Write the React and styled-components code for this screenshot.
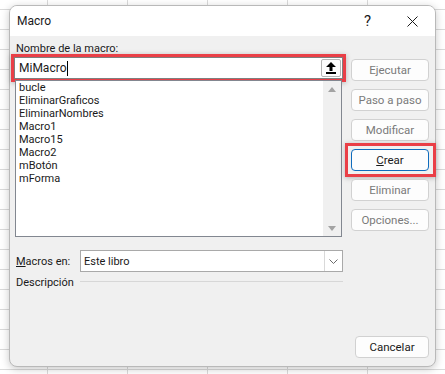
import React from "react";
import styled, { createGlobalStyle } from "styled-components";

const Global = createGlobalStyle`
  html, body { margin: 0; padding: 0; height: 100%; }
  body {
    background-color: #ffffff;
    background-image:
      linear-gradient(to right, #dadada 1px, transparent 1px),
      linear-gradient(to bottom, #dadada 1px, transparent 1px);
    background-size: 80px 20px;
    background-position: 47px 9px;
    font-family: Roboto, "Noto Sans", sans-serif;
    font-size: 11px;
    color: #1a1a1a;
    overflow: hidden;
  }
  #root { padding-top: 5px; padding-left: 9px; }
`;

const Dialog = styled.div`
  box-sizing: border-box;
  width: 427px;
  height: 362px;
  background: #f0f0f0;
  border: 1px solid #b9b9b9;
  border-radius: 8px;
  box-shadow: 0 2px 8px rgba(0, 0, 0, 0.22);
  display: flex;
  flex-direction: column;
`;

const TitleBar = styled.div`
  height: 30px;
  background: #ffffff;
  border-radius: 7px 7px 0 0;
  display: flex;
  align-items: center;
  padding-left: 7px;
`;

const Title = styled.div`
  flex: 1;
  font-size: 12px;
  color: #1a1a1a;
`;

const CaptionButton = styled.div`
  width: 45px;
  height: 30px;
  display: flex;
  align-items: center;
  justify-content: center;
  font-size: 15px;
  color: #1a1a1a;
`;

const Body = styled.div`
  flex: 1;
  display: flex;
  gap: 8px;
  padding: 5px 6px 8px 4px;
`;

const LeftCol = styled.div`
  width: 329px;
  display: flex;
  flex-direction: column;
`;

const Label = styled.div`
  height: 15px;
  line-height: 15px;
  padding-left: 2px;
  margin-bottom: 1px;
`;

const NameField = styled.div`
  box-sizing: border-box;
  height: 22px;
  background: #ffffff;
  border: 1px solid #7f7f7f;
  display: flex;
  align-items: center;
  padding-left: 4px;
  outline: 3px solid #ea3f47;
  outline-offset: 0px;
  box-shadow: 0 0 0 3px #ea3f47, 0 1px 5px 3px rgba(0, 0, 0, 0.25);
`;

const NameText = styled.span`
  flex: 1;
  display: flex;
  align-items: center;
  font-size: 12px;
  line-height: 14px;
`;

const Caret = styled.span`
  display: inline-block;
  width: 1px;
  height: 15px;
  background: #000;
  margin-left: 1px;
`;

const PickButton = styled.div`
  box-sizing: border-box;
  width: 20px;
  height: 18px;
  margin-right: 1px;
  border: 1px solid #b5b5b5;
  border-radius: 2px;
  background: #fdfdfd;
  display: flex;
  align-items: center;
  justify-content: center;
`;

const List = styled.div`
  box-sizing: border-box;
  margin-top: 1px;
  margin-left: 1px;
  width: 327px;
  height: 157px;
  background: #ffffff;
  border: 1px solid #828790;
  display: flex;
`;

const Items = styled.div`
  flex: 1;
  padding-left: 3px;
`;

const Item = styled.div`
  height: 13px;
  line-height: 13px;
  font-size: 11px;
  white-space: nowrap;
`;

const ScrollBar = styled.div`
  width: 18px;
  background: #f0f0f0;
  display: flex;
  flex-direction: column;
  justify-content: space-between;
  align-items: center;
  padding: 6px 0 5px;
`;

const FieldRow = styled.div`
  display: flex;
  align-items: center;
  margin-top: ${(p) => p.$top}px;
  height: ${(p) => p.$h}px;
`;

const RowLabel = styled.div`
  width: 64px;
  padding-left: 2px;
  flex-shrink: 0;
`;

const Combo = styled.div`
  box-sizing: border-box;
  width: 263px;
  height: 22px;
  background: #ffffff;
  border: 1px solid #a9a9a9;
  display: flex;
  align-items: center;
`;

const ComboText = styled.div`
  flex: 1;
  padding-left: 3px;
`;

const ComboButton = styled.div`
  box-sizing: border-box;
  width: 18px;
  height: 20px;
  border-left: 1px solid #d9d9d9;
  display: flex;
  align-items: center;
  justify-content: center;
`;

const Rule = styled.div`
  flex: 1;
  height: 1px;
  margin-top: -1px;
  background: #d7d7d7;
`;

const RightCol = styled.div`
  width: 78px;
  display: flex;
  flex-direction: column;
  gap: 8px;
  padding-top: 18px;
`;

const Button = styled.div`
  position: relative;
  box-sizing: border-box;
  height: 22px;
  width: ${(p) => (p.$w ? `${p.$w}px` : "100%")};
  align-self: flex-end;
  background: #fdfdfd;
  border: 1px solid ${(p) => (p.$default ? "#0f6cbd" : "#d1d1d1")};
  border-radius: 4px;
  display: flex;
  align-items: center;
  justify-content: center;
  font-size: 11.5px;
  color: ${(p) => (p.$disabled ? "#7a7a7a" : "#1a1a1a")};
  margin-top: ${(p) => (p.$bottom ? "auto" : "0")};
  ${(p) =>
    p.$highlight &&
    `
    &::after {
      content: "";
      position: absolute;
      inset: -7px -8px -7px -7px;
      border: 3px solid #ea3f47;
      box-shadow: 0 1px 5px rgba(0, 0, 0, 0.25);
      pointer-events: none;
    }
  `}
`;

const macros = [
  "bucle",
  "EliminarGraficos",
  "EliminarNombres",
  "Macro1",
  "Macro15",
  "Macro2",
  "mBotón",
  "mForma",
];

const UpArrow = () => (
  <svg width="8" height="5" viewBox="0 0 8 5">
    <path d="M0 5 L4 0 L8 5 Z" fill="#a3a3a3" />
  </svg>
);
const DownArrow = () => (
  <svg width="8" height="5" viewBox="0 0 8 5">
    <path d="M0 0 L4 5 L8 0 Z" fill="#a3a3a3" />
  </svg>
);

export default function App() {
  return (
    <>
      <Global />
      <Dialog>
        <TitleBar>
          <Title>Macro</Title>
          <CaptionButton>?</CaptionButton>
          <CaptionButton>
            <svg width="11" height="11" viewBox="0 0 11 11">
              <path d="M0.5 0.5 L10.5 10.5 M10.5 0.5 L0.5 10.5" stroke="#1a1a1a" strokeWidth="1" />
            </svg>
          </CaptionButton>
        </TitleBar>
        <Body>
          <LeftCol>
            <Label>Nombre de la macro:</Label>
            <NameField>
              <NameText>
                MiMacro
                <Caret />
              </NameText>
              <PickButton>
                <svg width="10" height="12" viewBox="0 0 10 12">
                  <path d="M5 0 L10 5 L6.5 5 L6.5 9 L3.5 9 L3.5 5 L0 5 Z" fill="#000" />
                  <rect x="0" y="10" width="10" height="2" fill="#000" />
                </svg>
              </PickButton>
            </NameField>
            <List>
              <Items>
                {macros.map((m) => (
                  <Item key={m}>{m}</Item>
                ))}
              </Items>
              <ScrollBar>
                <UpArrow />
                <DownArrow />
              </ScrollBar>
            </List>
            <FieldRow $top={13} $h={22}>
              <RowLabel>
                <u>M</u>acros en:
              </RowLabel>
              <Combo>
                <ComboText>Este libro</ComboText>
                <ComboButton>
                  <svg width="9" height="5" viewBox="0 0 9 5">
                    <path d="M0.5 0.5 L4.5 4.5 L8.5 0.5" stroke="#6b6b6b" strokeWidth="1" fill="none" />
                  </svg>
                </ComboButton>
              </Combo>
            </FieldRow>
            <FieldRow $top={3} $h={14}>
              <RowLabel>Descripción</RowLabel>
              <Rule />
            </FieldRow>
          </LeftCol>
          <RightCol>
            <Button $disabled>Ejecutar</Button>
            <Button $disabled>Paso a paso</Button>
            <Button $disabled>Modificar</Button>
            <Button $default $highlight>
              <span>
                <u>C</u>rear
              </span>
            </Button>
            <Button $disabled>Eliminar</Button>
            <Button $disabled>Opciones...</Button>
            <Button $bottom $w={74}>Cancelar</Button>
          </RightCol>
        </Body>
      </Dialog>
    </>
  );
}
